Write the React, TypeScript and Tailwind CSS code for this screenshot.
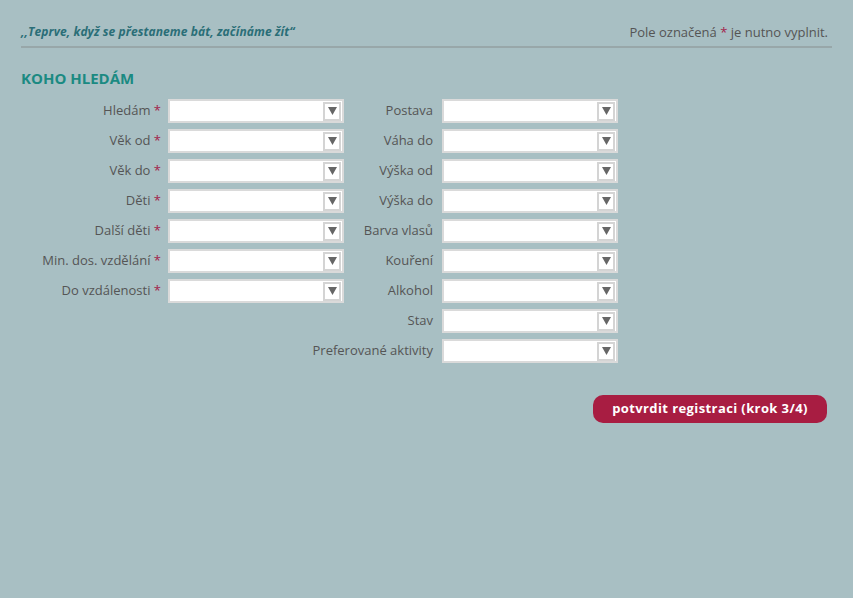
const leftRows = [
  'Hledám',
  'Věk od',
  'Věk do',
  'Děti',
  'Další děti',
  'Min. dos. vzdělání',
  'Do vzdálenosti',
]

const rightRows = [
  'Postava',
  'Váha do',
  'Výška od',
  'Výška do',
  'Barva vlasů',
  'Kouření',
  'Alkohol',
  'Stav',
  'Preferované aktivity',
]

function FakeSelect() {
  return (
    <div className="w-[176px] h-[24px] bg-white border-2 border-[#dadada] flex items-center justify-end pr-px">
      <div className="w-[18px] h-[19px] border-2 border-[#d4d4d4] bg-white flex items-center justify-center">
        <svg width="9" height="8" viewBox="0 0 9 8">
          <path d="M0 0 H9 L4.5 8 Z" fill="#666" />
        </svg>
      </div>
    </div>
  )
}

export default function App() {
  return (
    <div
      className="min-h-[598px] w-full bg-[#a8bfc3] px-[21px] pt-[22px]"
      style={{ fontFamily: '"Open Sans", "Liberation Sans", sans-serif' }}
    >
      <div className="flex items-end justify-between border-b-2 border-[#98a7a9] pb-[4px]">
        <p className="text-[12px] font-bold italic tracking-[0.1px] text-[#2a6e77] leading-[20px]">
          ,,Teprve, když se přestaneme bát, začínáme žít“
        </p>
        <p className="text-[13px] text-[#555] leading-[20px] pr-[4px]">
          Pole označená <span className="text-[#a3234b]">*</span> je nutno vyplnit.
        </p>
      </div>

      <h2 className="mt-[19px] text-[15px] font-bold text-[#1b8a82] leading-[22px]">KOHO HLEDÁM</h2>

      <div className="mt-[10px] flex flex-col gap-[6px]">
        {rightRows.map((right, i) => {
          const left = leftRows[i]
          return (
            <div key={right} className="flex items-center h-[24px]">
              <div className="w-[323px] flex items-center shrink-0">
                {left && (
                  <>
                    <div className="w-[140px] text-right text-[13px] text-[#555] whitespace-nowrap">
                      {left} <span className="text-[#a3234b]">*</span>
                    </div>
                    <div className="ml-[7px]">
                      <FakeSelect />
                    </div>
                  </>
                )}
              </div>
              <div className="w-[89px] flex justify-end text-[13px] text-[#555] whitespace-nowrap shrink-0">
                <span>{right}</span>
              </div>
              <div className="ml-[9px]">
                <FakeSelect />
              </div>
            </div>
          )
        })}
      </div>

      <div className="mt-[32px] flex justify-end pr-[5px]">
        <button className="w-[234px] h-[28px] rounded-[10px] bg-[#a81d42] text-white text-[13px] tracking-[0.4px] font-bold">
          potvrdit registraci (krok 3/4)
        </button>
      </div>
    </div>
  )
}
